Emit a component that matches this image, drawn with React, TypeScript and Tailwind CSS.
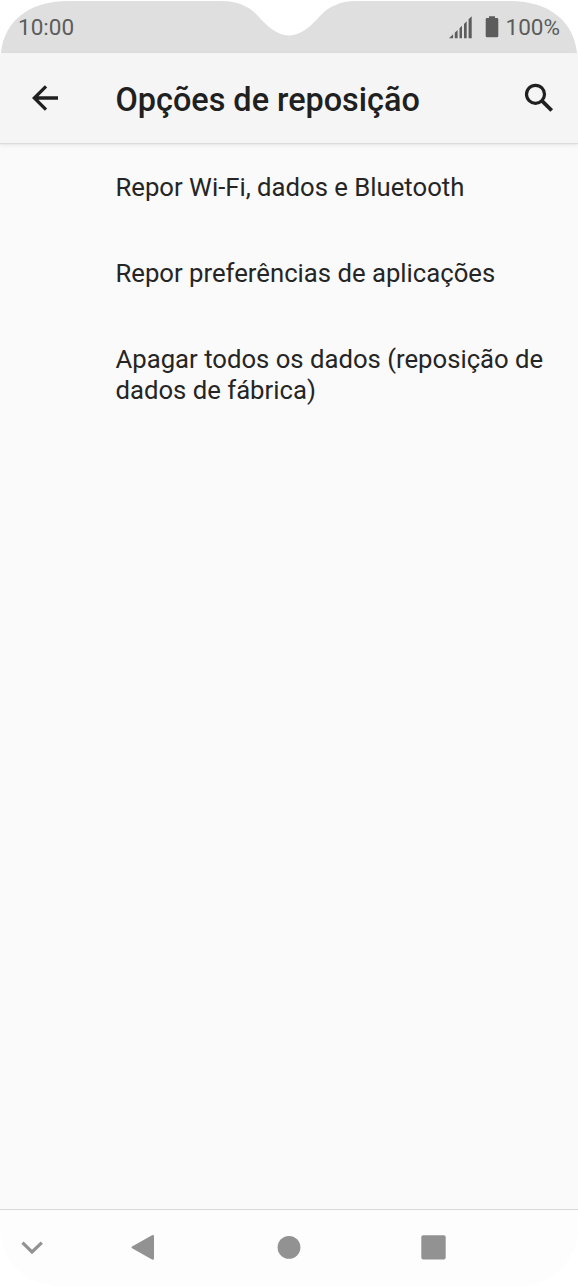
const options = [
  "Repor Wi-Fi, dados e Bluetooth",
  "Repor preferências de aplicações",
  "Apagar todos os dados (reposição de dados de fábrica)",
]

function SignalIcon() {
  return (
    <svg width="24" height="24" viewBox="0 0 24 24" fill="#5c5c5c">
      <path d="M0 23.3L4.1 19.2V23.3ZM5.8 17.8L8.6 15V23.3H5.8ZM10.5 13.3L13 10.8V23.3H10.5ZM15 8.9L17.7 6.2V23.3H15ZM19.6 4.3L22.7 1.2V23.3H19.6Z" />
    </svg>
  )
}

function BatteryIcon() {
  return (
    <svg width="14" height="22" viewBox="0 0 14 22" fill="#5c5c5c">
      <path d="M4 0.3H10V2H12Q13.3 2 13.3 3.3V20Q13.3 21.3 12 21.3H2Q0.7 21.3 0.7 20V3.3Q0.7 2 2 2H4Z" />
    </svg>
  )
}

function StatusBar() {
  return (
    <div className="relative h-[53px] shrink-0 bg-white text-[#5c5c5c]">
      <svg className="absolute inset-0" width="578" height="53" viewBox="0 0 578 53">
        <path
          d="M1 53C4 22 28 1 68 1H222C238 1 250 7 258 16C266 25 277 35.5 289 35.5C301 35.5 312 25 320 16C328 7 340 1 356 1H510C550 1 574 22 577 53Z"
          fill="#dfdfdf"
        />
      </svg>
      <div className="relative flex h-[55px] items-center justify-between pr-[18px] pl-[18px] text-[22.5px]">
        <span>10:00</span>
        <div className="flex items-center">
          <div className="pb-px">
            <SignalIcon />
          </div>
          <div className="pr-[7px] pb-px pl-[12px]">
            <BatteryIcon />
          </div>
          <span>100%</span>
        </div>
      </div>
    </div>
  )
}

function Header() {
  return (
    <header className="z-10 flex h-[90px] shrink-0 items-center bg-[#f5f5f5] pr-[24px] pl-[32px] text-[#202020] shadow-[0_1px_1px_#dcdcdc,0_2px_5px_rgba(0,0,0,0.08)]">
      <button aria-label="Voltar">
        <svg width="27" height="26" viewBox="0 0 27 26" fill="none" stroke="currentColor" strokeWidth="3.3">
          <path d="M26 13H2.5M14 1.3L2.3 13L14 24.7" />
        </svg>
      </button>
      <h1 className="ml-[56.5px] flex-1 pt-[4px] text-[32.4px] font-medium">Opções de reposição</h1>
      <button aria-label="Pesquisar">
        <svg width="30" height="30" viewBox="0 0 30 30" fill="none" stroke="currentColor" strokeWidth="3.2">
          <circle cx="11.5" cy="11.3" r="9" />
          <path d="M18 17.8L27.7 27.5" strokeWidth="3.8" />
        </svg>
      </button>
    </header>
  )
}

function NavBar() {
  return (
    <nav className="h-[77px] shrink-0 border-t-[1.5px] border-[#d9d9d9] bg-white">
      <div className="flex h-full items-center rounded-b-[58px] bg-[#fdfdfd]">
        <svg width="578" height="30" viewBox="0 0 578 30" fill="#929292">
          <path d="M22.5 9.7L32 19L41.8 9.7" fill="none" stroke="#929292" strokeWidth="3.2" />
          <path d="M132.5 13.2L152 2.2Q154 1.3 154 3.3V25.3Q154 27.3 152 26.4L132.5 15.6Q130.5 14.3 132.5 13.2Z" />
          <circle cx="289" cy="14.4" r="11.4" />
          <rect x="421.3" y="2.2" width="24.4" height="24.4" rx="2" />
        </svg>
      </div>
    </nav>
  )
}

export default function App() {
  return (
    <div className="flex h-[1286px] w-[578px] flex-col overflow-hidden bg-[#fafafa] font-['Roboto',sans-serif]">
      <StatusBar />
      <Header />
      <main className="flex-1 pt-[29px] pr-[20px] pl-[115.5px] text-[#252525]">
        <ul className="flex flex-col gap-[55px]">
          {options.map((option) => (
            <li key={option} className="text-[25.7px] leading-[31px]">
              {option}
            </li>
          ))}
        </ul>
      </main>
      <NavBar />
    </div>
  )
}
